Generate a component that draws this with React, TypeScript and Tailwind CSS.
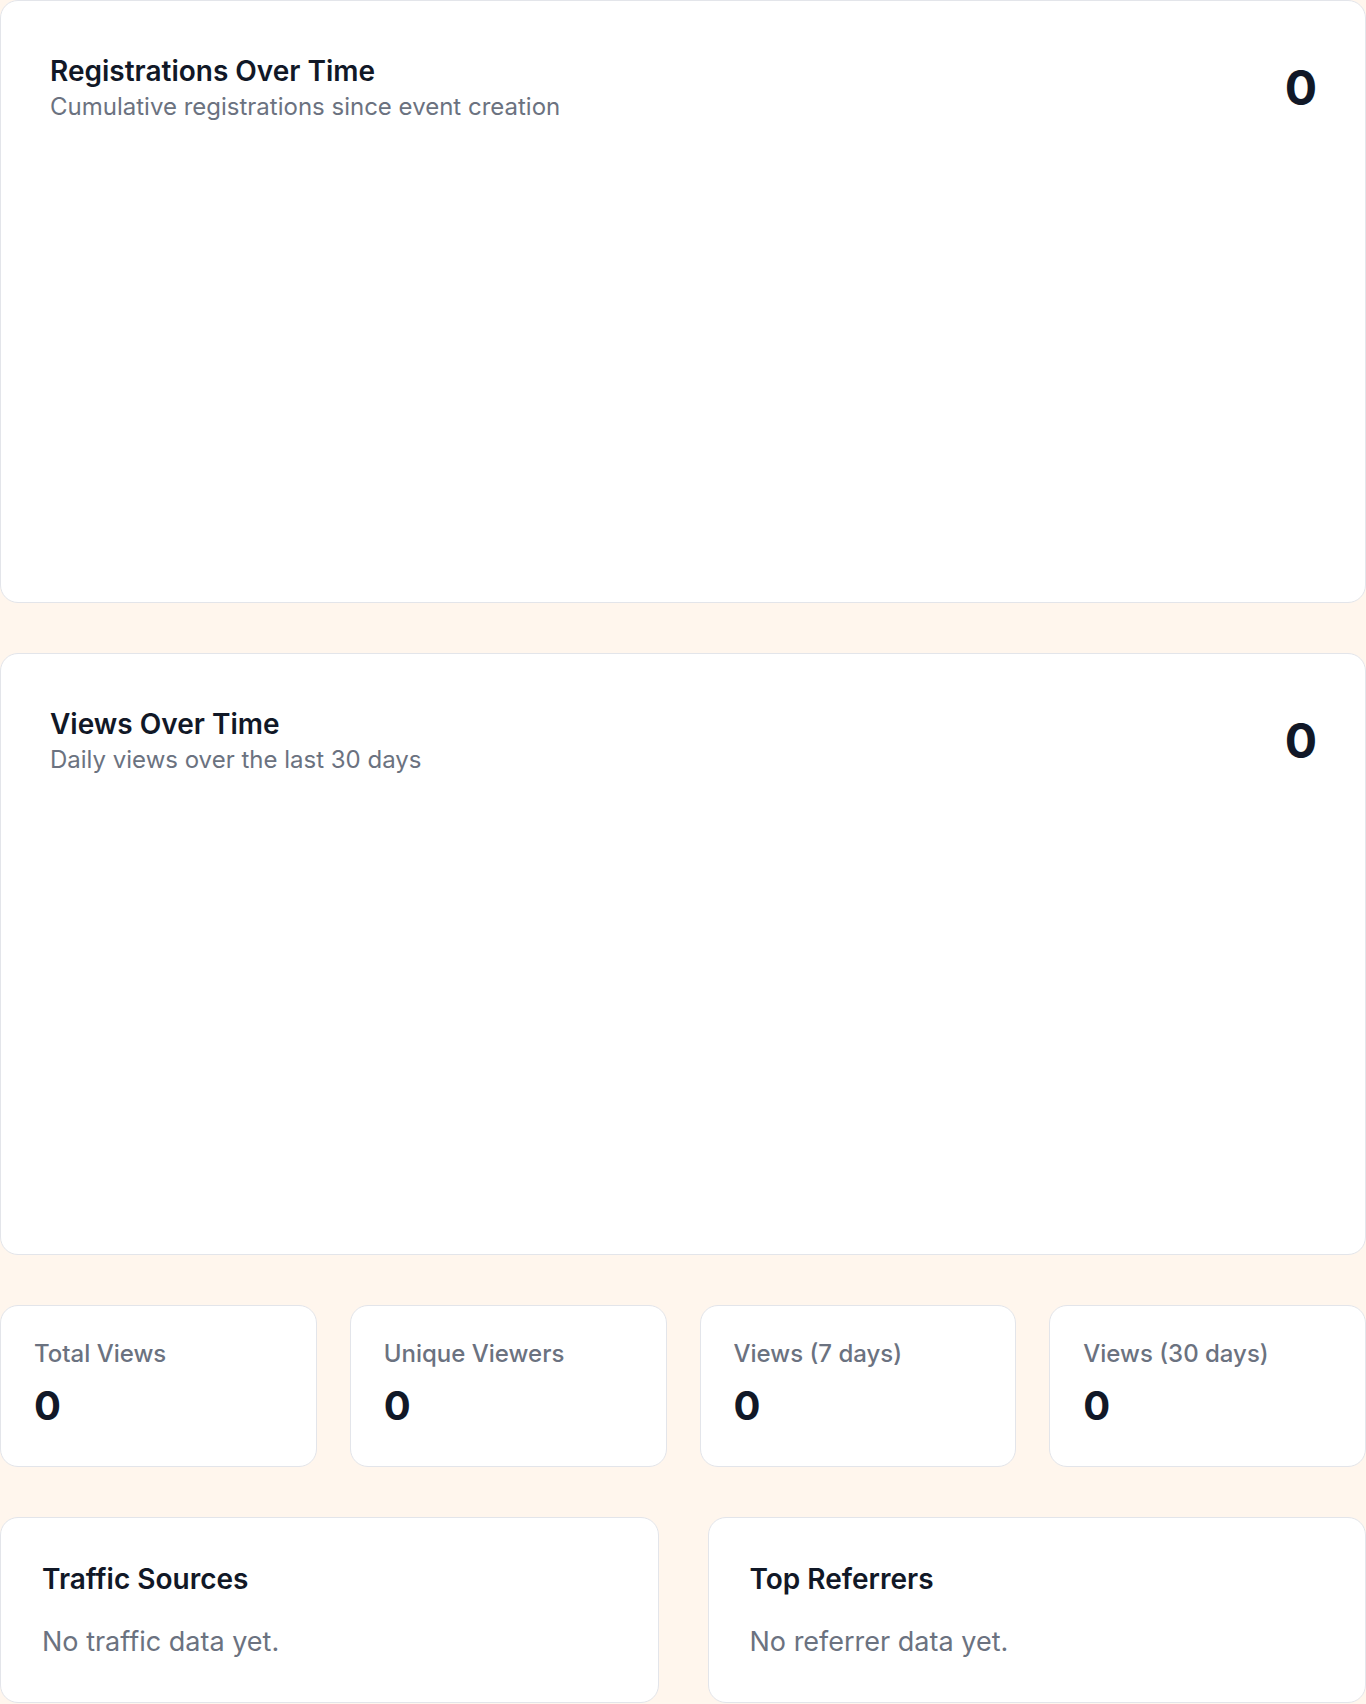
export default function App() {
  const stats = [
    { label: "Total Views", value: 0 },
    { label: "Unique Viewers", value: 0 },
    { label: "Views (7 days)", value: 0 },
    { label: "Views (30 days)", value: 0 },
  ];

  return (
    <div className="min-h-screen bg-[#fff6ed] font-['Inter',sans-serif]">
      <div className="flex flex-col gap-[50px]">
        {/* Chart cards */}
        <ChartCard
          title="Registrations Over Time"
          subtitle="Cumulative registrations since event creation"
          value={0}
          height="h-[603px]"
        />
        <ChartCard
          title="Views Over Time"
          subtitle="Daily views over the last 30 days"
          value={0}
          height="h-[602px]"
        />

        {/* Stat tiles */}
        <div className="grid grid-cols-4 gap-[33px]">
          {stats.map((s) => (
            <div
              key={s.label}
              className="h-[162px] rounded-[18px] border-[1.5px] border-[#e3e5ea] bg-white px-[33px] pt-[33px]"
            >
              <div className="text-[24px] leading-[30px] font-medium text-[#6b7280]">{s.label}</div>
              <div className="mt-[13px] text-[40px] leading-[48px] font-bold text-[#111827]">{s.value}</div>
            </div>
          ))}
        </div>

        {/* Lists */}
        <div className="grid grid-cols-2 gap-[49px]">
          <ListCard title="Traffic Sources" empty="No traffic data yet." />
          <ListCard title="Top Referrers" empty="No referrer data yet." />
        </div>
      </div>
    </div>
  );
}

function ChartCard({
  title,
  subtitle,
  value,
  height,
}: {
  title: string;
  subtitle: string;
  value: number;
  height: string;
}) {
  return (
    <div className={`${height} rounded-[18px] border-[1.5px] border-[#e3e5ea] bg-white`}>
      <div className="flex items-center justify-between pl-[49px] pr-[48px] pt-[53px]">
        <div>
          <h3 className="text-[28px] leading-[34px] font-semibold text-[#111827]">{title}</h3>
          <p className="mt-[4px] text-[24px] leading-[30px] text-[#6b7280]">{subtitle}</p>
        </div>
        <div className="text-[48px] leading-[48px] font-bold text-[#111827]">{value}</div>
      </div>
    </div>
  );
}

function ListCard({ title, empty }: { title: string; empty: string }) {
  return (
    <div className="h-[186px] rounded-[18px] border-[1.5px] border-[#e3e5ea] bg-white px-[41px] pt-[43px]">
      <h3 className="text-[28px] leading-[36px] font-semibold text-[#111827]">{title}</h3>
      <p className="mt-[28px] text-[27px] leading-[34px] text-[#6b7280]">{empty}</p>
    </div>
  );
}
